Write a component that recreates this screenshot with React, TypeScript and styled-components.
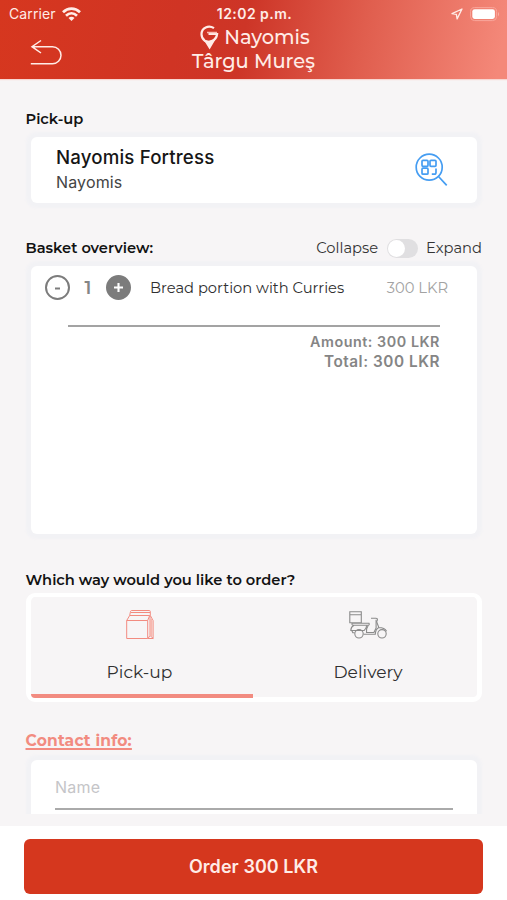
import React from "react";
import styled, { createGlobalStyle } from "styled-components";

const Global = createGlobalStyle`
  * { box-sizing: border-box; }
  body { margin: 0; font-family: Montserrat, Inter, sans-serif; color: #161616; background: #fff; }
  button { font: inherit; border: 0; padding: 0; background: none; }
`;

const Screen = styled.div`
  width: 507px;
  height: 900px;
  display: flex;
  flex-direction: column;
  overflow: hidden;
  background: #f7f5f6;
`;

const Header = styled.header`
  height: 79px;
  flex: none;
  color: #ffece7;
  background: linear-gradient(100deg, #d6371f 0%, #d03424 35%, #cd3527 48%, #e05e4e 71%, #f48879 98%);
  box-shadow: 0 1px 1px #f8d6d1;
`;

const StatusBar = styled.div`
  height: 25px;
  display: grid;
  grid-template-columns: 1fr auto 1fr;
  align-items: center;
  padding: 2px 7px 0 9px;
  font: 400 14px/24px Inter, sans-serif;
`;

const Carrier = styled.div`
  display: flex;
  align-items: center;
  gap: 6px;
  letter-spacing: 0.1px;
`;

const Clock = styled.div`
  font-weight: 600;
  font-size: 14px;
  letter-spacing: 0.45px;
`;

const Indicators = styled.div`
  display: flex;
  justify-content: flex-end;
  align-items: center;
  gap: 7px;
`;

const NavBar = styled.div`
  display: grid;
  grid-template-columns: 1fr auto 1fr;
  padding: 0 30px;
`;

const BackButton = styled.button`
  height: 54px;
  display: flex;
  align-items: center;
  color: inherit;
`;

const Title = styled.h1`
  margin: 0;
  display: flex;
  flex-direction: column;
  align-items: center;
  font-weight: 500;
  font-size: 19.4px;
  line-height: 24px;
`;

const TitleRow = styled.span`
  height: 24px;
  display: flex;
  align-items: center;
  gap: 5px;
`;

const BrandRow = styled(TitleRow)`
  padding-left: 3px;
`;

const Content = styled.main`
  flex: none;
  height: 735px;
  overflow: hidden;
  padding: 28px 25px 0 26px;
`;

const SectionHead = styled.div<{ $gap?: number }>`
  height: 24px;
  margin-top: ${(p) => p.$gap ?? 0}px;
  display: flex;
  justify-content: space-between;
  align-items: center;
`;

const SectionTitle = styled.h2`
  margin: 0 0 0 -0.5px;
  font-weight: 600;
  font-size: 14.65px;
  line-height: 24px;
  color: #121212;
`;

const ContactTitle = styled(SectionTitle)`
  font-size: 15.5px;
  font-weight: 700;
  letter-spacing: 0.2px;
  color: #f28b80;
  text-decoration: underline;
  text-decoration-thickness: 1.5px;
  text-underline-offset: 2px;
`;

const Card = styled.section<{ $height: number; $top: number }>`
  height: ${(p) => p.$height}px;
  margin: ${(p) => p.$top}px 5px 0;
  background: #fff;
  border-radius: 6px;
  box-shadow: 0 0 3px 4.5px #f2f2f5;
`;

const VenueCard = styled(Card)`
  display: flex;
  justify-content: space-between;
  padding: 8px 29px 0 25px;
  font-family: Inter, sans-serif;
`;

const VenueName = styled.div`
  font-size: 18.7px;
  line-height: 25px;
  font-weight: 500;
  letter-spacing: 0.15px;
`;

const VenueBrand = styled.div`
  font-size: 16px;
  line-height: 24px;
  letter-spacing: 0.15px;
  color: #444;
`;

const ScanButton = styled.button`
  height: 34px;
  margin-top: 8px;
`;

const ToggleGroup = styled.div`
  display: flex;
  align-items: center;
  font-size: 14.7px;
  color: #343434;
`;

const Toggle = styled.span`
  width: 31px;
  height: 19px;
  margin: 0 8px 0 9px;
  padding: 1px;
  border-radius: 10px;
  background: #e0dfe1;
`;

const Knob = styled.span`
  display: block;
  width: 17px;
  height: 17px;
  border-radius: 50%;
  background: #fff;
`;

const Basket = styled(Card)`
  padding-top: 8px;
`;

const BasketItem = styled.div`
  height: 27px;
  margin: 0 29px 0 14px;
  display: flex;
  align-items: center;
`;

const StepButton = styled.button<{ $filled?: boolean }>`
  width: 25px;
  height: 25px;
  display: grid;
  place-items: center;
  border-radius: 50%;
  border: 2px solid #7c7c7c;
  background: ${(p) => (p.$filled ? "#7c7c7c" : "#fff")};
  color: ${(p) => (p.$filled ? "#fff" : "#7c7c7c")};
`;

const Quantity = styled.span`
  width: 36px;
  text-align: center;
  font-weight: 600;
  font-size: 18px;
  color: #858585;
`;

const ItemName = styled.span`
  margin-left: 19px;
  flex: 1;
  white-space: nowrap;
  font-size: 14.7px;
  color: #303030;
`;

const ItemPrice = styled.span`
  font-size: 14.7px;
  color: #a2a2a2;
`;

const Totals = styled.div`
  margin: 24px 37px 0;
  padding-top: 5px;
  border-top: 2px solid #a3a3a3;
  text-align: right;
  font: 600 14px/20px Inter, sans-serif;
  color: #858585;
`;

const Total = styled.div<{ $size: number }>`
  font-size: ${(p) => p.$size}px;
  letter-spacing: 0.55px;
`;

const Methods = styled.div`
  height: 109px;
  margin-top: 1px;
  display: grid;
  grid-template-columns: 222px 1fr;
  border: 5px solid #fff;
  border-top-width: 4px;
  border-radius: 9px;
`;

const Method = styled.button<{ $active?: boolean }>`
  height: 101px;
  display: flex;
  flex-direction: column;
  align-items: center;
  padding-top: 9px;
  padding-right: ${(p) => (p.$active ? 5 : 0)}px;
  padding-left: ${(p) => (p.$active ? 0 : 6)}px;
  border-bottom: 4px solid ${(p) => (p.$active ? "#f28b80" : "transparent")};
  border-bottom-left-radius: 4px;
  color: #303030;
`;

const MethodIcon = styled.span`
  height: 38px;
  display: flex;
  align-items: center;
`;

const MethodLabel = styled.span`
  margin-top: 16px;
  font-size: 17.1px;
  line-height: 24px;
`;

const Field = styled.div`
  height: 50px;
  margin: 0 24px;
  padding-top: 15px;
  border-bottom: 2px solid #aaa;
  font: 400 16px/24px Inter, sans-serif;
  letter-spacing: 0.2px;
  color: #c5c5c8;
`;

const Footer = styled.footer`
  height: 74px;
  margin-top: 12px;
  padding: 13px 24px 6px;
  background: #fff;
`;

const OrderButton = styled.button`
  width: 459px;
  height: 55px;
  border-radius: 6px;
  background: #d5371e;
  color: #ffece7;
  font: 600 18px/55px Inter, sans-serif;
  letter-spacing: 0.05px;
`;

const WifiIcon = () => (
  <svg width="19" height="15" viewBox="0 0 19 15" fill="none" stroke="currentColor" strokeWidth="2.7">
    <path d="M1 5.2C6 .3 13 .3 18 5.2" />
    <path d="M4 8.7c3.4-3.2 7.6-3.2 11 0" />
    <path d="m9.5 14-3-3.1c1.7-1.5 4.3-1.5 6 0z" fill="currentColor" stroke="none" />
  </svg>
);

const LocationIcon = () => (
  <svg width="12" height="12" viewBox="0 0 12 12" fill="none" stroke="currentColor" strokeWidth="1.3" strokeLinejoin="round">
    <path d="M11 1 1 5.7l4.4.7.7 4.5z" />
  </svg>
);

const BatteryIcon = () => (
  <svg width="30" height="15" viewBox="0 0 30 15">
    <rect x=".6" y=".6" width="26" height="13" rx="4" fill="none" stroke="#f9a69b" />
    <rect x="2.3" y="2.3" width="22.6" height="9.6" rx="2.3" fill="#fff" />
    <path d="M28 5q2 2.2 0 4.4z" fill="#f9b2a9" />
  </svg>
);

const BackIcon = () => (
  <svg width="34" height="28" viewBox="0 0 34 28" fill="none" stroke="currentColor" strokeWidth="1.5">
    <path d="M11 2.5 2 8.7 11 15M2 8.7h20.5a8.5 8.5 0 0 1 0 17H.8" />
  </svg>
);

const PinLogo = () => (
  <svg width="19" height="25" viewBox="0 0 19 25" fill="none">
    <path d="M14 3.1C8.6-.3 1.5 2.6 1.5 9.2c0 2.7 1.3 4.9 3.2 6.5 4.8 2.6 11.6 0 12.4-6.7H8.5" stroke="currentColor" strokeWidth="2.2" />
    <path d="M3 13.8c3.5 2.8 9 2.8 12.8.2L9.6 24.4z" fill="currentColor" />
    <path d="M7 7.5h10" stroke="#fab9af" strokeWidth="1.5" />
  </svg>
);

const ScanIcon = () => (
  <svg width="33" height="34" viewBox="0 0 33 34" fill="none" stroke="#459df2" strokeWidth="1.7">
    <circle cx="14.2" cy="14.2" r="13" />
    <path d="m23.5 23.5 8.2 8.8" />
    <rect x="7" y="7.3" width="6" height="6" rx="1" />
    <rect x="15" y="7.3" width="6" height="6" rx="1" />
    <rect x="7" y="15.2" width="6" height="6" rx="1" />
    <path d="M21 15.5v4q0 1.7-1.7 1.7h-2.5" />
  </svg>
);

const MinusIcon = () => (
  <svg width="11" height="11" viewBox="0 0 11 11" stroke="currentColor" strokeWidth="2"><path d="M3 6.5h5" /></svg>
);

const PlusIcon = () => (
  <svg width="11" height="11" viewBox="0 0 11 11" stroke="currentColor" strokeWidth="2.1"><path d="M1 5.5h9M5.5 1v9" /></svg>
);

const BagIcon = () => (
  <svg width="28" height="30" viewBox="0 0 28 30" fill="none" stroke="#f28b80" strokeWidth="1">
    <path d="M.7 10.5h21v18h-21zM.7 10.5l3-5h20l-2 5M3.7 5.5l.8-4q.2-1 1.2-1h17.6q1 0 1 1V5.5l2.8 5v18H22" />
    <path d="M5 2.5h19M24 5.5v20l-2 3M24 25.5l3.3 3" />
    <path d="M25.2 9v17" stroke="#f7b7af" strokeWidth="2.2" />
  </svg>
);

const ScooterIcon = () => (
  <svg width="39" height="28" viewBox="0 0 39 28" fill="none" stroke="#8b8b8b" strokeWidth="1.1">
    <path d="M.8.7h11.5v11H.8zM.8 3.7h11.5M3 12.2h17q.8 2-1 2H4q-1.2 0-1-2z" />
    <path d="M5 14.3c-2.2 1.2-3.2 3.2-3.2 5.2h13.4M17.7 14.3c-.2 2.5-1.2 4.1-2.5 5.2M2.8 19.5l1 2.3h1.8M19.3 14.3c-1.5 2.3-2.1 4.8-1.8 7.2h7.4l2.2-4.5V8.8" />
    <path d="M22 7.2h4.7q2-.1 1.7 2l-.8 1.5 2.2 5.8c3.5 0 6.5 1.3 7.8 3.8M29.8 16.5c-2.6 1.3-3.4 3.6-3.5 6.8H14.5" />
    <circle cx="10" cy="22.8" r="4.2" />
    <circle cx="33" cy="22.8" r="4.2" />
  </svg>
);

export default function App() {
  return (
    <>
      <Global />
      <Screen>
        <Header>
          <StatusBar>
            <Carrier>Carrier <WifiIcon /></Carrier>
            <Clock>12:02 p.m.</Clock>
            <Indicators><LocationIcon /><BatteryIcon /></Indicators>
          </StatusBar>
          <NavBar>
            <BackButton aria-label="Back"><BackIcon /></BackButton>
            <Title>
              <BrandRow><PinLogo />Nayomis</BrandRow>
              <TitleRow>Târgu Mureş</TitleRow>
            </Title>
          </NavBar>
        </Header>
        <Content>
          <SectionHead><SectionTitle>Pick-up</SectionTitle></SectionHead>
          <VenueCard $height={66} $top={6}>
            <div>
              <VenueName>Nayomis Fortress</VenueName>
              <VenueBrand>Nayomis</VenueBrand>
            </div>
            <ScanButton aria-label="Scan"><ScanIcon /></ScanButton>
          </VenueCard>
          <SectionHead $gap={33}>
            <SectionTitle>Basket overview:</SectionTitle>
            <ToggleGroup>Collapse<Toggle><Knob /></Toggle>Expand</ToggleGroup>
          </SectionHead>
          <Basket $height={268} $top={6}>
            <BasketItem>
              <StepButton aria-label="Less"><MinusIcon /></StepButton>
              <Quantity>1</Quantity>
              <StepButton $filled aria-label="More"><PlusIcon /></StepButton>
              <ItemName>Bread portion with Curries</ItemName>
              <ItemPrice>300 LKR</ItemPrice>
            </BasketItem>
            <Totals>
              <Total $size={14.3}>Amount: 300 LKR</Total>
              <Total $size={15.3}>Total: 300 LKR</Total>
            </Totals>
          </Basket>
          <SectionHead $gap={34}>
            <SectionTitle>Which way would you like to order?</SectionTitle>
          </SectionHead>
          <Methods>
            <Method $active>
              <MethodIcon><BagIcon /></MethodIcon>
              <MethodLabel>Pick-up</MethodLabel>
            </Method>
            <Method>
              <MethodIcon><ScooterIcon /></MethodIcon>
              <MethodLabel>Delivery</MethodLabel>
            </Method>
          </Methods>
          <SectionHead $gap={27}><ContactTitle>Contact info:</ContactTitle></SectionHead>
          <Card $height={100} $top={7}><Field>Name</Field></Card>
        </Content>
        <Footer><OrderButton>Order 300 LKR</OrderButton></Footer>
      </Screen>
    </>
  );
}
